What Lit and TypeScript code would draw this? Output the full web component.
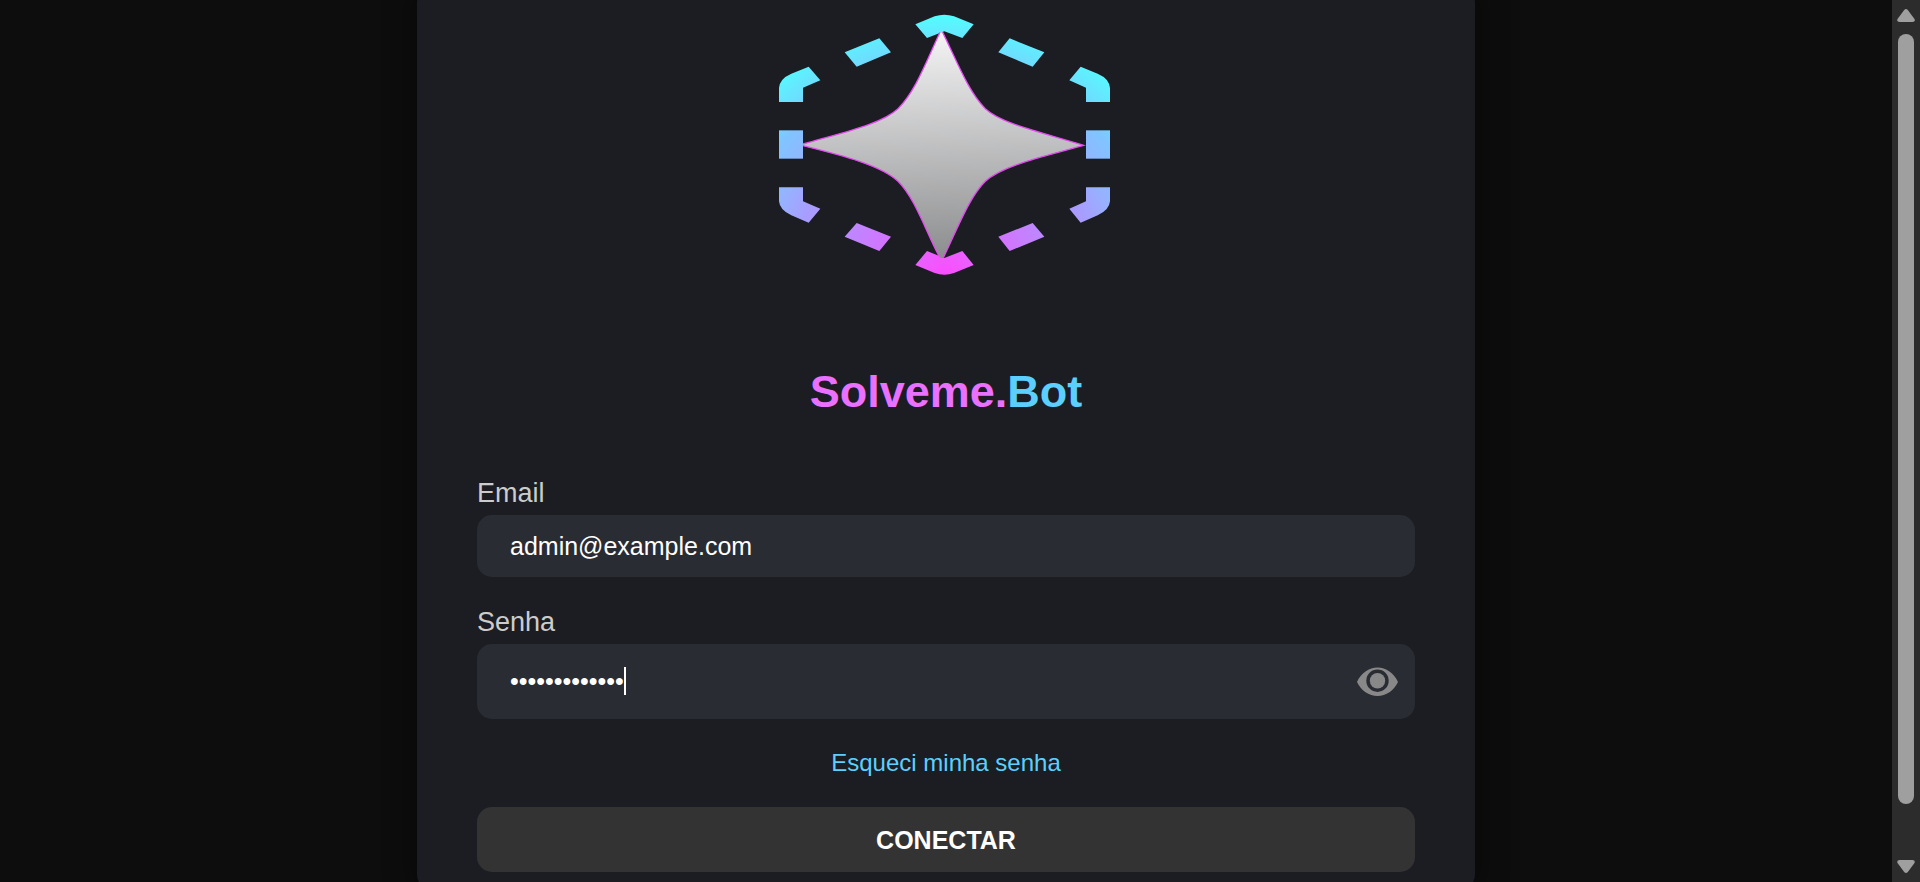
import { LitElement, html, css, svg } from "lit";
import { customElement, state } from "lit/decorators.js";

@customElement("brand-logo")
class BrandLogo extends LitElement {
  static styles = css`
    :host { display: block; }
    svg { display: block; width: 370px; max-width: 100%; height: auto; }
  `;
  render() {
    const dashes = [
      "M466 73 L524 49 Q553 39 582 49 L641 73 L607 114 L553 94 L501 114 Z",
      "M254 157 L358 115 L393 157 L290 200 Z",
      "M853 157 L749 115 L715 157 L818 200 Z",
      "M57 306 V264 Q59 236 94 221 L146 200 L181 241 L129 263 V306 Z",
      "M1050 306 V264 Q1048 236 1013 221 L962 200 L928 241 L978 263 V306 Z",
      "M57 391 H129 V476 H57 Z",
      "M978 391 H1050 V476 H978 Z",
      "M57 562 V604 Q59 630 94 646 L146 668 L181 626 L129 604 V562 Z",
      "M1050 562 V604 Q1048 630 1013 646 L962 668 L928 626 L978 604 V562 Z",
      "M254 710 L290 669 L393 710 L358 753 Z",
      "M853 710 L818 669 L715 710 L749 753 Z",
      "M466 795 L501 753 L553 774 L607 753 L641 795 L582 819 Q553 829 524 819 Z",
    ];
    return html`<svg viewBox="3 0 1110 870" role="img" aria-label="Solveme.Bot">
      <defs>
        <radialGradient id="ring" gradientUnits="userSpaceOnUse" cx="553" cy="830" r="790">
          <stop offset="0" stop-color="#fb4bff" />
          <stop offset="0.08" stop-color="#f05aff" />
          <stop offset="0.35" stop-color="#c481ff" />
          <stop offset="0.58" stop-color="#a79eff" />
          <stop offset="0.68" stop-color="#96b2ff" />
          <stop offset="0.8" stop-color="#80c4ff" />
          <stop offset="0.88" stop-color="#6cdfff" />
          <stop offset="0.94" stop-color="#60eeff" />
          <stop offset="1" stop-color="#4fffff" />
        </radialGradient>
        <linearGradient id="star" gradientUnits="userSpaceOnUse" x1="540" y1="96" x2="560" y2="774">
          <stop offset="0" stop-color="#f4f4f5" />
          <stop offset="1" stop-color="#8c8d8e" />
        </linearGradient>
      </defs>
      ${dashes.map((d) => svg`<path d=${d} fill="url(#ring)" />`)}
      <path
        d="M540 97 H548 C590 182 625 275 676 326 C725 372 850 398 971 436 C850 470 725 497 676 544 C625 595 592 688 550 773 H539 C495 688 465 595 414 544 C365 497 250 467 129 437 V432 C250 397 365 372 414 326 C465 277 500 182 540 97 Z"
        fill="url(#star)"
      />
      <path
        d="M548 97 C590 182 625 275 676 326 C725 372 850 398 971 436 C850 470 725 497 676 544 C625 595 592 688 550 773 M537 768 C495 688 465 595 414 544 C365 497 250 467 129 437 M129 432 C250 397 365 372 414 326 C465 277 500 182 540 97"
        fill="none" stroke="#e44cf0" stroke-width="4"
      />
    </svg>`;
  }
}

@customElement("window-scrollbar")
class WindowScrollbar extends LitElement {
  static styles = css`
    :host {
      display: flex; flex-direction: column; align-items: center;
      box-sizing: border-box; width: 28px; flex: none; padding: 8px 0;
      background: #2c2c2c; color: #9f9f9f;
    }
    svg { display: block; width: 18px; height: 14px; flex: none; }
    .track { flex: 1; display: flex; flex-direction: column; width: 16px; padding: 12px 0 56px; }
    .thumb { flex: 1; border-radius: 8px; background: currentColor; }
  `;
  render() {
    return html`
      <svg viewBox="0 0 18 14"><path d="M7.200 2 Q9 0 10.800 2 L17.500 11 Q18.500 14 15.500 14 H2.500 Q-.5 14 .5 11 Z" fill="currentColor" /></svg>
      <div class="track"><div class="thumb"></div></div>
      <svg viewBox="0 0 18 14"><path d="M7.200 12 Q9 14 10.800 12 L17.500 3 Q18.500 0 15.500 0 H2.500 Q-.5 0 .5 3 Z" fill="currentColor" /></svg>
    `;
  }
}

@customElement("app-root")
class AppRoot extends LitElement {
  @state() private visible = false;

  static styles = css`
    :host {
      display: flex; height: 100vh; overflow: hidden;
      background: #0d0d0d; color: #fff;
      font-family: Arial, "Liberation Sans", sans-serif;
    }
    * { box-sizing: border-box; }
    .page { flex: 1; min-width: 0; display: flex; justify-content: center; align-items: flex-start; }
    .card {
      width: 100%; max-width: 1058px; margin-top: -15px; padding: 15px 60px 20px;
      border-radius: 18px; background: #1c1d22;
      box-shadow: 0 0 30px rgba(0, 0, 0, 0.5);
      display: flex; flex-direction: column;
    }
    brand-logo { align-self: center; }
    h1 { margin: 76px 0 0; text-align: center; font-size: 45px; line-height: 52px; color: #ea70ff; }
    .accent { color: #5bd0ff; }
    .field { display: flex; flex-direction: column; gap: 6px; }
    .email { margin-top: 59px; }
    .password { margin-top: 29px; }
    label { font-size: 27px; line-height: 32px; color: #ccc; }
    input {
      width: 100%; border: 0; outline: 0; border-radius: 15px;
      padding: 0 33px; background: #2a2c34; color: #fff;
      font: 25px/30px Arial, "Liberation Sans", sans-serif;
    }
    .email input { height: 62px; }
    .box { position: relative; display: flex; }
    .box input { height: 75px; padding-right: 80px; caret-color: transparent; }
    .caret { position: absolute; left: 147px; top: 23px; width: 2px; height: 28px; background: #fff; }
    .eye {
      position: absolute; right: 15px; top: 15px; width: 45px; height: 45px;
      padding: 0; border: 0; background: none; color: #888; cursor: pointer;
    }
    .eye svg { display: block; width: 45px; height: 45px; }
    .forgot { align-self: center; margin-top: 30px; font-size: 24px; line-height: 28px; color: #5bd0ff; text-decoration: none; }
    .submit {
      margin-top: 30px; height: 65px; border: 0; border-radius: 15px;
      background: #333; color: #fff; cursor: pointer;
      font: bold 25px/30px Arial, "Liberation Sans", sans-serif;
    }
  `;

  render() {
    return html`
      <main class="page">
        <form class="card" @submit=${(e: Event) => e.preventDefault()}>
          <brand-logo></brand-logo>
          <h1>Solveme.<span class="accent">Bot</span></h1>
          <div class="field email">
            <label for="email">Email</label>
            <input id="email" type="email" value="admin@example.com" />
          </div>
          <div class="field password">
            <label for="password">Senha</label>
            <div class="box">
              <input id="password" type=${this.visible ? "text" : "password"} value="administrador" />
              <span class="caret"></span>
              <button class="eye" type="button" aria-label="Mostrar senha" @click=${() => (this.visible = !this.visible)}>
                <svg viewBox="0 0 45 45">
                  <path fill="currentColor" fill-rule="evenodd"
                    d="M2 23 C6 14 14 8.500 22.500 8.500 S39 14 43 23 C39 31.500 31 37 22.500 37 S6 31.500 2 23 Z M22.500 10.500 a11.200 11.200 0 1 0 0 22.400 a11.200 11.200 0 1 0 0 -22.400 Z" />
                  <circle cx="22.500" cy="21.700" r="7.700" fill="currentColor" />
                </svg>
              </button>
            </div>
          </div>
          <a class="forgot" href="#">Esqueci minha senha</a>
          <button class="submit" type="submit">CONECTAR</button>
        </form>
      </main>
      <window-scrollbar aria-hidden="true"></window-scrollbar>
    `;
  }
}
